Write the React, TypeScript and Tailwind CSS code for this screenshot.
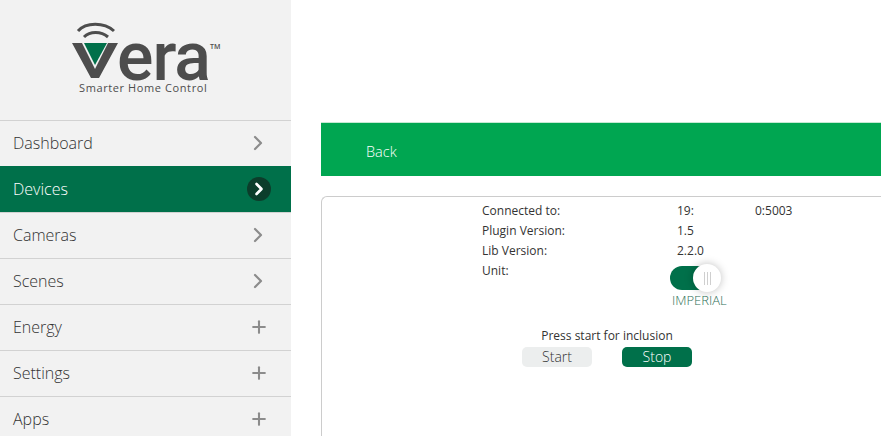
import { ChevronRight, Plus } from "lucide-react"

const menu = [
    { label: "Dashboard", icon: "chevron" },
    { label: "Devices", icon: "chevron", active: true },
    { label: "Cameras", icon: "chevron" },
    { label: "Scenes", icon: "chevron" },
    { label: "Energy", icon: "plus" },
    { label: "Settings", icon: "plus" },
    { label: "Apps", icon: "plus" },
]

const info = [
    { label: "Connected to:", value: "19:", extra: "0:5003" },
    { label: "Plugin Version:", value: "1.5" },
    { label: "Lib Version:", value: "2.2.0" },
]

function Logo() {
    return (
        <div className="pt-[22px] pl-[72px]">
            <div className="flex items-start h-[59px]">
                <svg width="46" height="58" viewBox="0 0 46 58" className="shrink-0">
                    {/* signal arcs */}
                    <path d="M6 9 C14 0 32 0 42 9" fill="none" stroke="#4d4d4d" strokeWidth="3" />
                    <path d="M12 15 C18 9 29 9 36 15" fill="none" stroke="#4d4d4d" strokeWidth="3" />
                    {/* V */}
                    <path d="M0 21 L10 21 L23 47 L36 21 L46 21 L27 56 L19 56 Z" fill="#4d4d4d" />
                    <path d="M12 21 L35 21 L23 43 Z" fill="#00704a" />
                </svg>
                <span className="font-['Roboto',sans-serif] font-medium text-[68px] leading-[46px] tracking-[-1px] text-[#4d4d4d] -ml-[1px] mt-[12px]">era</span>
                <span className="font-['Open_Sans',sans-serif] text-[7px] leading-none font-semibold text-[#4d4d4d] mt-[21px]">TM</span>
            </div>
            <div className="font-['Open_Sans',sans-serif] text-[11px] leading-[13px] tracking-[0.6px] text-[#4d4d4d] ml-[7px]">
                Smarter Home Control
            </div>
        </div>
    )
}

function Sidebar() {
    return (
        <aside className="w-[291px] shrink-0 bg-[#f2f2f2] h-full overflow-hidden">
            <div className="h-[120px]">
                <Logo />
            </div>
            {menu.map((item) => (
                <div
                    key={item.label}
                    className={`h-[46px] flex items-center justify-between pb-[2px] pl-[13px] pr-[21px] text-[16px] font-light border-t ${
                        item.active ? "bg-[#00704a] text-white border-[#00704a]" : "text-[#333] border-[#d2d2d2]"
                    }`}
                >
                    <span>{item.label}</span>
                    {item.active ? (
                        <span className="w-6 h-6 rounded-full bg-[#0c3d2b] flex items-center justify-center -mr-[1px]">
                            <ChevronRight size={20} strokeWidth={3.2} className="text-white" />
                        </span>
                    ) : item.icon === "chevron" ? (
                        <ChevronRight size={24} strokeWidth={2.2} className="text-[#8c8c8c]" />
                    ) : (
                        <Plus size={20} strokeWidth={2.5} className="text-[#8c8c8c] mr-[1px]" />
                    )}
                </div>
            ))}
        </aside>
    )
}

export default function App() {
    return (
        <div className="w-[881px] h-[436px] flex overflow-hidden bg-white font-['Open_Sans',sans-serif]">
            <Sidebar />

            <main className="flex-1 pl-[30px] pt-[122px] min-w-0">
                <div className="h-[54px] bg-[#00a651] border-t border-[#c5e9d3] flex items-center pl-[45px] pt-[4px] text-white text-[14.5px] font-light">
                    Back
                </div>

                <div className="mt-[20px] h-[260px] border-l border-t border-[#cccccc] rounded-tl-[6px] pl-[160px] pt-[4px] text-[12px] text-[#333]">
                    {info.map((row) => (
                        <div key={row.label} className="h-[20px] flex items-center">
                            <span className="w-[195px]">{row.label}</span>
                            <span className="w-[78px]">{row.value}</span>
                            {row.extra && <span>{row.extra}</span>}
                        </div>
                    ))}

                    <div className="flex">
                        <span className="w-[188px] h-[20px] flex items-center">Unit:</span>
                        <div className="flex flex-col items-start pt-[5px]">
                            <div className="w-[48px] h-[24px] rounded-full bg-[#00704a] relative">
                                <span className="absolute -right-[3px] -top-[2px] w-[28px] h-[28px] rounded-full bg-white shadow-[0_0_8px_rgba(0,0,0,0.25)] flex items-center justify-center gap-[2px]">
                                    <i className="w-[1px] h-[13px] bg-[#cfcfcf]" />
                                    <i className="w-[1px] h-[13px] bg-[#cfcfcf]" />
                                    <i className="w-[1px] h-[13px] bg-[#cfcfcf]" />
                                </span>
                            </div>
                            <span className="text-[13px] leading-[16px] font-light text-[#2f7058] mt-[2px] ml-[2px]">IMPERIAL</span>
                        </div>
                    </div>

                    <div className="w-[250px] mt-[19px] flex flex-col items-center">
                        <span className="leading-[18px]">Press start for inclusion</span>
                        <div className="flex gap-[30px] mt-[2px]">
                            <button className="w-[70px] h-[20px] rounded-[5px] bg-[#eceeee] text-[#333] text-[14px] font-light leading-none">Start</button>
                            <button className="w-[70px] h-[20px] rounded-[5px] bg-[#00704a] text-white text-[14px] font-light leading-none">Stop</button>
                        </div>
                    </div>
                </div>
            </main>
        </div>
    )
}
